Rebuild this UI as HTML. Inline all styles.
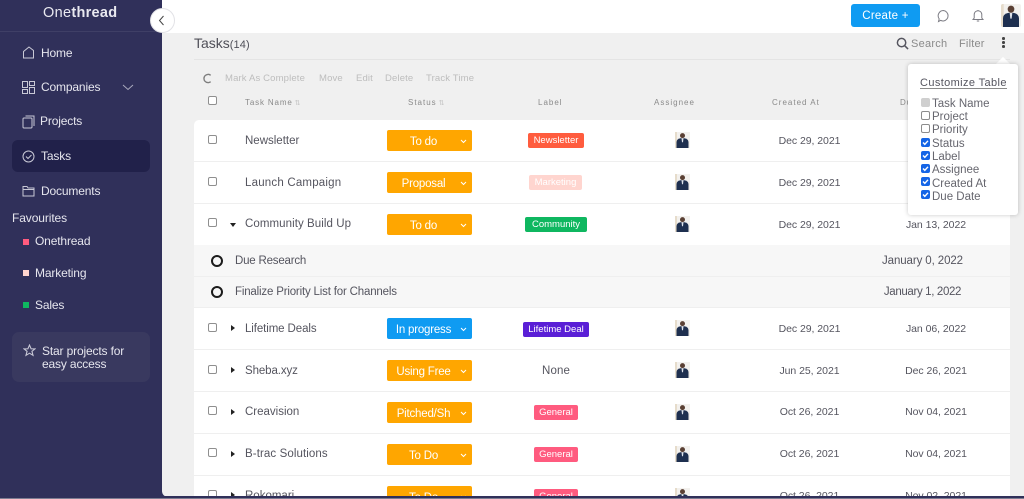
<!DOCTYPE html>
<html><head><meta charset="utf-8"><title>Onethread Tasks</title>
<style>
*{box-sizing:border-box}
html,body{margin:0;padding:0;width:1024px;height:499px;overflow:hidden;background:#30305a}
body{position:relative;font-family:"Liberation Sans",sans-serif;color:#55555f;filter:blur(.3px)}
.a,.t,.c{position:absolute}
.t{white-space:nowrap;line-height:16px;height:16px;margin-top:1px}
.c{white-space:nowrap;line-height:16px;height:16px;text-align:center;margin-top:1px}
.t.n{margin-top:0}
.n{color:#e6e6ee;font-size:12px;letter-spacing:-.15px}
.h{color:#8a8a8a;font-size:8px;letter-spacing:1px;text-align:center}
.g{color:#bdbdbd;font-size:9.5px;letter-spacing:.15px}
.nm{font-size:11.5px;letter-spacing:0;left:245px;color:#55555f}
.dt{font-size:10.5px;letter-spacing:-.05px;color:#55555f}
.sd{font-size:11.5px;letter-spacing:-.1px;color:#55555f}
.st{position:absolute;left:387px;width:85px;height:21px;border-radius:2px;color:#fff;background:#ffa600;font-size:11.5px;letter-spacing:-.2px;line-height:24px}
.st span{position:absolute;left:0;width:73px;text-align:center;overflow:hidden;white-space:nowrap;padding:0 8px}
.st svg{position:absolute;left:73px;top:9px}
.lb{position:absolute;height:15px;line-height:15px;border-radius:2px;color:#fff;font-size:9.5px;letter-spacing:0;text-align:center;white-space:nowrap}
.cb{position:absolute;left:208px;width:9px;height:9px;border:1px solid #8f8f8f;border-radius:2px;background:#fff}
.ln{position:absolute;left:194px;width:816px;height:1px;background:#efefef}
.tr{position:absolute;left:231px;width:0;height:0;border-left:4px solid #222;border-top:3px solid transparent;border-bottom:3px solid transparent}
.av{position:absolute;left:675px;width:15px;height:16px}
.cc{position:absolute;left:921px;width:9px;height:9px;border-radius:2px;background:#1565e6}
.cc svg{position:absolute;left:0;top:0}
.ce{position:absolute;left:921px;width:9px;height:9px;border-radius:2px;border:1px solid #8c8c8c;background:#fff}
.dd{position:absolute;left:932px;font-size:11.5px;letter-spacing:0;color:#66666e;line-height:13px;white-space:nowrap;margin-top:1px}
.ring{position:absolute;width:12px;height:12px;border:2px solid #1c1c1c;border-radius:50%}
.sq{position:absolute;left:23px;width:6px;height:6px}
</style></head>
<body>
<svg width="0" height="0" style="position:absolute"><defs>
<symbol id="p" viewBox="0 0 15 16"><rect width="15" height="16" fill="#f3f1ee"/><rect y="0" width="2" height="16" fill="#e6dccb"/><circle cx="7.5" cy="3.6" r="2.500" fill="#5a4034"/><path d="M1.500 16V10Q1.500 7 5.500 6.200H9.500Q13.500 7 13.500 10V16Z" fill="#1e2f4f"/><path d="M6.500 6.200h2l-.5 4h-1z" fill="#dfe3ea"/></symbol>
</defs></svg>

<!-- sidebar -->
<div class="a" style="left:0;top:0;width:162px;height:499px;background:#30305a"></div>
<div class="a" style="left:0;top:31px;width:162px;height:1px;background:#3f3f66"></div>
<div class="t" style="left:43px;top:4px;color:#e9e9f0;font-size:14.500px;letter-spacing:.3px">One<b>thread</b></div>

<svg class="a" style="left:22px;top:46px" width="13" height="13" viewBox="0 0 13 13" fill="none" stroke="#c9c9d6"><path d="M1.500 12V5.500L7 1l4.500 3.500V12Z"/></svg>
<div class="t n" style="left:41px;top:45px">Home</div>
<svg class="a" style="left:22px;top:81px" width="13" height="13" viewBox="0 0 13 13" fill="none" stroke="#c9c9d6"><rect x=".5" y=".5" width="5" height="6"/><rect x="7.500" y=".5" width="5" height="4"/><rect x=".5" y="8.500" width="5" height="4"/><rect x="7.500" y="6.500" width="5" height="6"/></svg>
<div class="t n" style="left:41px;top:79px">Companies</div>
<svg class="a" style="left:122px;top:84px" width="12" height="7" viewBox="0 0 12 7" fill="none" stroke="#a9a9bd"><path d="M1 1l5 4.500L11 1"/></svg>
<svg class="a" style="left:22px;top:115px" width="13" height="14" viewBox="0 0 13 14" fill="none" stroke="#c9c9d6"><rect x="1" y="3" width="9" height="10" rx="1"/><path d="M3.500 1H12v10"/></svg>
<div class="t n" style="left:40px;top:113px">Projects</div>
<div class="a" style="left:12px;top:140px;width:138px;height:32px;background:#21214a;border-radius:6px"></div>
<svg class="a" style="left:22px;top:150px" width="13" height="13" viewBox="0 0 13 13" fill="none" stroke="#c9c9d6"><circle cx="6.500" cy="6.500" r="5.500"/><path d="M4 6.500l2 2 3.500-3.500"/></svg>
<div class="t n" style="left:41px;top:148px">Tasks</div>
<svg class="a" style="left:22px;top:185px" width="13" height="12" viewBox="0 0 13 12" fill="none" stroke="#c9c9d6"><path d="M1 3V1.500h4L6 3h6v8H1Z"/><path d="M1 4.500h11"/></svg>
<div class="t n" style="left:41px;top:183px">Documents</div>

<div class="t n" style="left:12px;top:210px;letter-spacing:-.1px">Favourites</div>
<div class="sq" style="top:239px;background:#ff5b7f"></div>
<div class="t n" style="left:35px;top:233px">Onethread</div>
<div class="sq" style="top:270px;background:#ffd5cf"></div>
<div class="t n" style="left:35px;top:265px">Marketing</div>
<div class="sq" style="top:302px;background:#0fb760"></div>
<div class="t n" style="left:35px;top:297px">Sales</div>

<div class="a" style="left:12px;top:332px;width:138px;height:50px;background:#39395f;border-radius:7px"></div>
<svg class="a" style="left:23px;top:344px" width="13" height="13" viewBox="0 0 24 24" fill="none" stroke="#c9c9d6" stroke-width="2"><path d="M12 2l3 7h7l-5.500 4.500L18.500 21 12 17l-6.500 4 2-7.500L2 9h7Z"/></svg>
<div class="t n" style="left:42px;top:343px">Star projects for</div>
<div class="t n" style="left:42px;top:356px">easy access</div>

<!-- main -->
<div class="a" style="left:162px;top:0;width:862px;height:497px;background:#f0f0f0;border-bottom-left-radius:6px"></div>
<div class="a" style="left:162px;top:0;width:862px;height:33px;background:#fff"></div>
<div class="a" style="left:150px;top:8px;width:25px;height:25px;border-radius:50%;background:#fff;border:1px solid #e2e2e6"></div>
<svg class="a" style="left:158px;top:15px" width="7" height="11" viewBox="0 0 7 11" fill="none" stroke="#444"><path d="M5.500 1L1.500 5.500l4 4.500"/></svg>

<!-- topbar right -->
<div class="a" style="left:851px;top:4px;width:69px;height:23px;background:#0f9bf2;border-radius:3px;color:#fff;font-size:11.500px;letter-spacing:.25px;line-height:25px;text-align:center">Create +</div>
<svg class="a" style="left:937px;top:9px" width="13" height="14" viewBox="0 0 13 14" fill="none" stroke="#7c7c84"><path d="M6.500 1.500a5.300 5.300 0 0 1 0 10.500c-1 0-2-.2-2.700-.7L1.500 12.500l.7-2.600A5.300 5.300 0 0 1 6.500 1.500Z"/></svg>
<svg class="a" style="left:972px;top:9px" width="12" height="14" viewBox="0 0 12 14" fill="none" stroke="#7c7c84"><path d="M1 10.500h10L9.800 9V5.500a3.800 3.800 0 0 0-7.600 0V9Z"/><path d="M4.800 12h2.400"/><path d="M6 1v.7"/></svg>
<svg class="a" style="left:1001px;top:4px;border-radius:2px" width="20" height="23" viewBox="0 0 15 16" preserveAspectRatio="none"><use href="#p"/></svg>

<!-- header -->
<div class="t" style="left:194px;top:34px;font-size:14px;letter-spacing:0;color:#4f4f58">Tasks<span style="font-size:11px;letter-spacing:.1px">(14)</span></div>
<div class="a" style="left:194px;top:59px;width:816px;height:1px;background:#e4e4e4"></div>
<svg class="a" style="left:896px;top:37px" width="13" height="13" viewBox="0 0 14 14" fill="none" stroke="#55555f" stroke-width="1.600"><circle cx="6" cy="6" r="4.500"/><path d="M9.500 9.500L13 13"/></svg>
<div class="t" style="left:911px;top:35px;font-size:11px;letter-spacing:.25px;color:#8a8a8a">Search</div>
<div class="t" style="left:959px;top:35px;font-size:11px;letter-spacing:.2px;color:#8a8a8a">Filter</div>
<div class="a" style="left:1002px;top:37px;width:2.500px;height:2.500px;border-radius:50%;background:#444"></div>
<div class="a" style="left:1002px;top:41px;width:2.500px;height:2.500px;border-radius:50%;background:#444"></div>
<div class="a" style="left:1002px;top:45px;width:2.500px;height:2.500px;border-radius:50%;background:#444"></div>

<svg class="a" style="left:202px;top:73px" width="10" height="11" viewBox="0 0 10 12" fill="none" stroke="#7e7e7e" stroke-width="1.500"><path d="M9 2.500A4.500 4.500 0 1 0 9 9.500"/></svg>
<div class="t g" style="left:225px;top:70px">Mark As Complete</div>
<div class="t g" style="left:319px;top:70px">Move</div>
<div class="t g" style="left:356px;top:70px">Edit</div>
<div class="t g" style="left:385px;top:70px">Delete</div>
<div class="t g" style="left:426px;top:70px">Track Time</div>

<div class="cb" style="top:96px"></div>
<div class="t h" style="left:245px;top:94px;letter-spacing:.85px">Task Name<span style="color:#c4c4c4;font-size:7px;letter-spacing:0"> ⇅</span></div>
<div class="t h" style="left:408px;top:94px">Status<span style="color:#c4c4c4;font-size:7px;letter-spacing:0"> ⇅</span></div>
<div class="t h" style="left:538px;top:94px">Label</div>
<div class="t h" style="left:654px;top:94px">Assignee</div>
<div class="t h" style="left:772px;top:94px">Created At</div>
<div class="t h" style="left:900px;top:94px">Due</div>

<!-- table -->
<div class="a" style="left:194px;top:120px;width:816px;height:376px;background:#fff;border-radius:5px 5px 0 0"></div>
<div class="a" style="left:194px;top:245px;width:816px;height:63px;background:#f7f7f7"></div>
<div class="ln" style="top:161px"></div><div class="ln" style="top:203px"></div><div class="ln" style="top:276px"></div><div class="ln" style="top:307px"></div><div class="ln" style="top:349px"></div><div class="ln" style="top:391px"></div><div class="ln" style="top:433px"></div><div class="ln" style="top:475px"></div>

<!-- checks -->
<div class="cb" style="top:135px"></div><div class="cb" style="top:177px"></div><div class="cb" style="top:218px"></div><div class="cb" style="top:323px"></div><div class="cb" style="top:365px"></div><div class="cb" style="top:406px"></div><div class="cb" style="top:448px"></div><div class="cb" style="top:490px"></div>

<!-- arrows -->
<div class="a" style="left:230px;top:223px;width:0;height:0;border-top:4px solid #222;border-left:3.500px solid transparent;border-right:3.500px solid transparent"></div>
<div class="tr" style="top:325px"></div><div class="tr" style="top:367px"></div><div class="tr" style="top:409px"></div><div class="tr" style="top:451px"></div><div class="tr" style="top:492px"></div>

<!-- names -->
<div class="t nm" style="top:132px">Newsletter</div>
<div class="t nm" style="top:174px;letter-spacing:.2px">Launch Campaign</div>
<div class="t nm" style="top:215px;letter-spacing:.07px">Community Build Up</div>
<div class="ring" style="left:211px;top:255px"></div>
<div class="t nm" style="left:235px;top:252px;letter-spacing:-.2px">Due Research</div>
<div class="ring" style="left:211px;top:286px"></div>
<div class="t nm" style="left:235px;top:283px;letter-spacing:-.18px">Finalize Priority List for Channels</div>
<div class="t nm" style="top:320px;letter-spacing:-.1px">Lifetime Deals</div>
<div class="t nm" style="top:362px;letter-spacing:-.1px">Sheba.xyz</div>
<div class="t nm" style="top:403px">Creavision</div>
<div class="t nm" style="top:445px;letter-spacing:.1px">B-trac Solutions</div>
<div class="t nm" style="top:487px">Rokomari</div>

<!-- status -->
<div class="st" style="top:130px"><span>To do</span><svg width="7" height="5" viewBox="0 0 7 5" fill="none" stroke="#fff"><path d="M1 1l2.500 2.500L6 1"/></svg></div>
<div class="st" style="top:172px"><span>Proposal</span><svg width="7" height="5" viewBox="0 0 7 5" fill="none" stroke="#fff"><path d="M1 1l2.500 2.500L6 1"/></svg></div>
<div class="st" style="top:214px"><span>To do</span><svg width="7" height="5" viewBox="0 0 7 5" fill="none" stroke="#fff"><path d="M1 1l2.500 2.500L6 1"/></svg></div>
<div class="st" style="top:318px;background:#0f9bf2"><span>In progress</span><svg width="7" height="5" viewBox="0 0 7 5" fill="none" stroke="#fff"><path d="M1 1l2.500 2.500L6 1"/></svg></div>
<div class="st" style="top:360px"><span>Using Free</span><svg width="7" height="5" viewBox="0 0 7 5" fill="none" stroke="#fff"><path d="M1 1l2.500 2.500L6 1"/></svg></div>
<div class="st" style="top:402px"><span>Pitched/Sh</span><svg width="7" height="5" viewBox="0 0 7 5" fill="none" stroke="#fff"><path d="M1 1l2.500 2.500L6 1"/></svg></div>
<div class="st" style="top:444px"><span>To Do</span><svg width="7" height="5" viewBox="0 0 7 5" fill="none" stroke="#fff"><path d="M1 1l2.500 2.500L6 1"/></svg></div>
<div class="st" style="top:486px"><span>To Do</span><svg width="7" height="5" viewBox="0 0 7 5" fill="none" stroke="#fff"><path d="M1 1l2.500 2.500L6 1"/></svg></div>

<!-- labels -->
<div class="lb" style="left:528px;top:133px;width:56px;background:#ff5c3e">Newsletter</div>
<div class="lb" style="left:529px;top:175px;width:53px;background:#ffd5cf">Marketing</div>
<div class="lb" style="left:525px;top:217px;width:62px;background:#0fb760">Community</div>
<div class="lb" style="left:523px;top:322px;width:66px;background:#5a1fd6">Lifetime Deal</div>
<div class="c" style="left:526px;top:362px;width:60px;font-size:11.5px;letter-spacing:.1px">None</div>
<div class="lb" style="left:534px;top:405px;width:44px;background:#ff5b7f">General</div>
<div class="lb" style="left:534px;top:447px;width:44px;background:#ff5b7f">General</div>
<div class="lb" style="left:534px;top:489px;width:44px;background:#ff5b7f">General</div>

<!-- assignee -->
<svg class="av" style="top:132px"><use href="#p"/></svg>
<svg class="av" style="top:174px"><use href="#p"/></svg>
<svg class="av" style="top:216px"><use href="#p"/></svg>
<svg class="av" style="top:320px"><use href="#p"/></svg>
<svg class="av" style="top:362px"><use href="#p"/></svg>
<svg class="av" style="top:404px"><use href="#p"/></svg>
<svg class="av" style="top:446px"><use href="#p"/></svg>
<svg class="av" style="top:488px"><use href="#p"/></svg>

<!-- created -->
<div class="c dt" style="left:769.500px;top:132px;width:80px">Dec 29, 2021</div>
<div class="c dt" style="left:769.500px;top:174px;width:80px">Dec 29, 2021</div>
<div class="c dt" style="left:769.500px;top:216px;width:80px">Dec 29, 2021</div>
<div class="c dt" style="left:769.500px;top:320px;width:80px">Dec 29, 2021</div>
<div class="c dt" style="left:769.500px;top:362px;width:80px">Jun 25, 2021</div>
<div class="c dt" style="left:769.500px;top:403px;width:80px">Oct 26, 2021</div>
<div class="c dt" style="left:769.500px;top:445px;width:80px">Oct 26, 2021</div>
<div class="c dt" style="left:769.500px;top:487px;width:80px">Oct 26, 2021</div>

<!-- due -->
<div class="c sd" style="left:882px;top:252px;width:80px">January 0, 2022</div>
<div class="c sd" style="left:882.500px;top:283px;width:80px;letter-spacing:-.35px">January 1, 2022</div>
<div class="c dt" style="left:896px;top:216px;width:80px">Jan 13, 2022</div>
<div class="c dt" style="left:896px;top:320px;width:80px">Jan 06, 2022</div>
<div class="c dt" style="left:896px;top:362px;width:80px">Dec 26, 2021</div>
<div class="c dt" style="left:896px;top:403px;width:80px">Nov 04, 2021</div>
<div class="c dt" style="left:896px;top:445px;width:80px">Nov 04, 2021</div>
<div class="c dt" style="left:896px;top:487px;width:80px">Nov 02, 2021</div>

<!-- popover -->
<div class="a" style="left:998px;top:59px;width:10px;height:10px;background:#fff;transform:rotate(45deg)"></div>
<div class="a" style="left:908px;top:64px;width:110px;height:151px;background:#fff;border-radius:3px;box-shadow:0 0 5px rgba(0,0,0,.22)"></div>
<div class="t" style="left:920px;top:74px;font-size:11px;letter-spacing:.38px;color:#55555f">Customize Table</div>
<div class="a" style="left:920px;top:88px;width:87px;height:1px;background:#8a8a8a"></div>
<div class="a" style="left:921px;top:98px;width:9px;height:9px;border-radius:2px;background:#cfcfcf"></div>
<div class="ce" style="top:111px"></div>
<div class="ce" style="top:124px"></div>
<div class="cc" style="top:138px"><svg width="9" height="9" viewBox="0 0 9 9" fill="none" stroke="#fff" stroke-width="1.400"><path d="M2 4.500l1.800 1.800L7 2.800"/></svg></div>
<div class="cc" style="top:151px"><svg width="9" height="9" viewBox="0 0 9 9" fill="none" stroke="#fff" stroke-width="1.400"><path d="M2 4.500l1.800 1.800L7 2.800"/></svg></div>
<div class="cc" style="top:164px"><svg width="9" height="9" viewBox="0 0 9 9" fill="none" stroke="#fff" stroke-width="1.400"><path d="M2 4.500l1.800 1.800L7 2.800"/></svg></div>
<div class="cc" style="top:177px"><svg width="9" height="9" viewBox="0 0 9 9" fill="none" stroke="#fff" stroke-width="1.400"><path d="M2 4.500l1.800 1.800L7 2.800"/></svg></div>
<div class="cc" style="top:190px"><svg width="9" height="9" viewBox="0 0 9 9" fill="none" stroke="#fff" stroke-width="1.400"><path d="M2 4.500l1.800 1.800L7 2.800"/></svg></div>
<div class="dd" style="top:97px">Task Name</div>
<div class="dd" style="top:110px">Project</div>
<div class="dd" style="top:123px">Priority</div>
<div class="dd" style="top:137px">Status</div>
<div class="dd" style="top:150px">Label</div>
<div class="dd" style="top:163px">Assignee</div>
<div class="dd" style="top:177px">Created At</div>
<div class="dd" style="top:190px">Due Date</div>

<!-- bottom strip -->
<div class="a" style="left:162px;top:496px;width:862px;height:3px;background:#30305a"></div>
<div class="a" style="left:0;top:498px;width:1024px;height:1px;background:#7d7d92"></div>
</body></html>
